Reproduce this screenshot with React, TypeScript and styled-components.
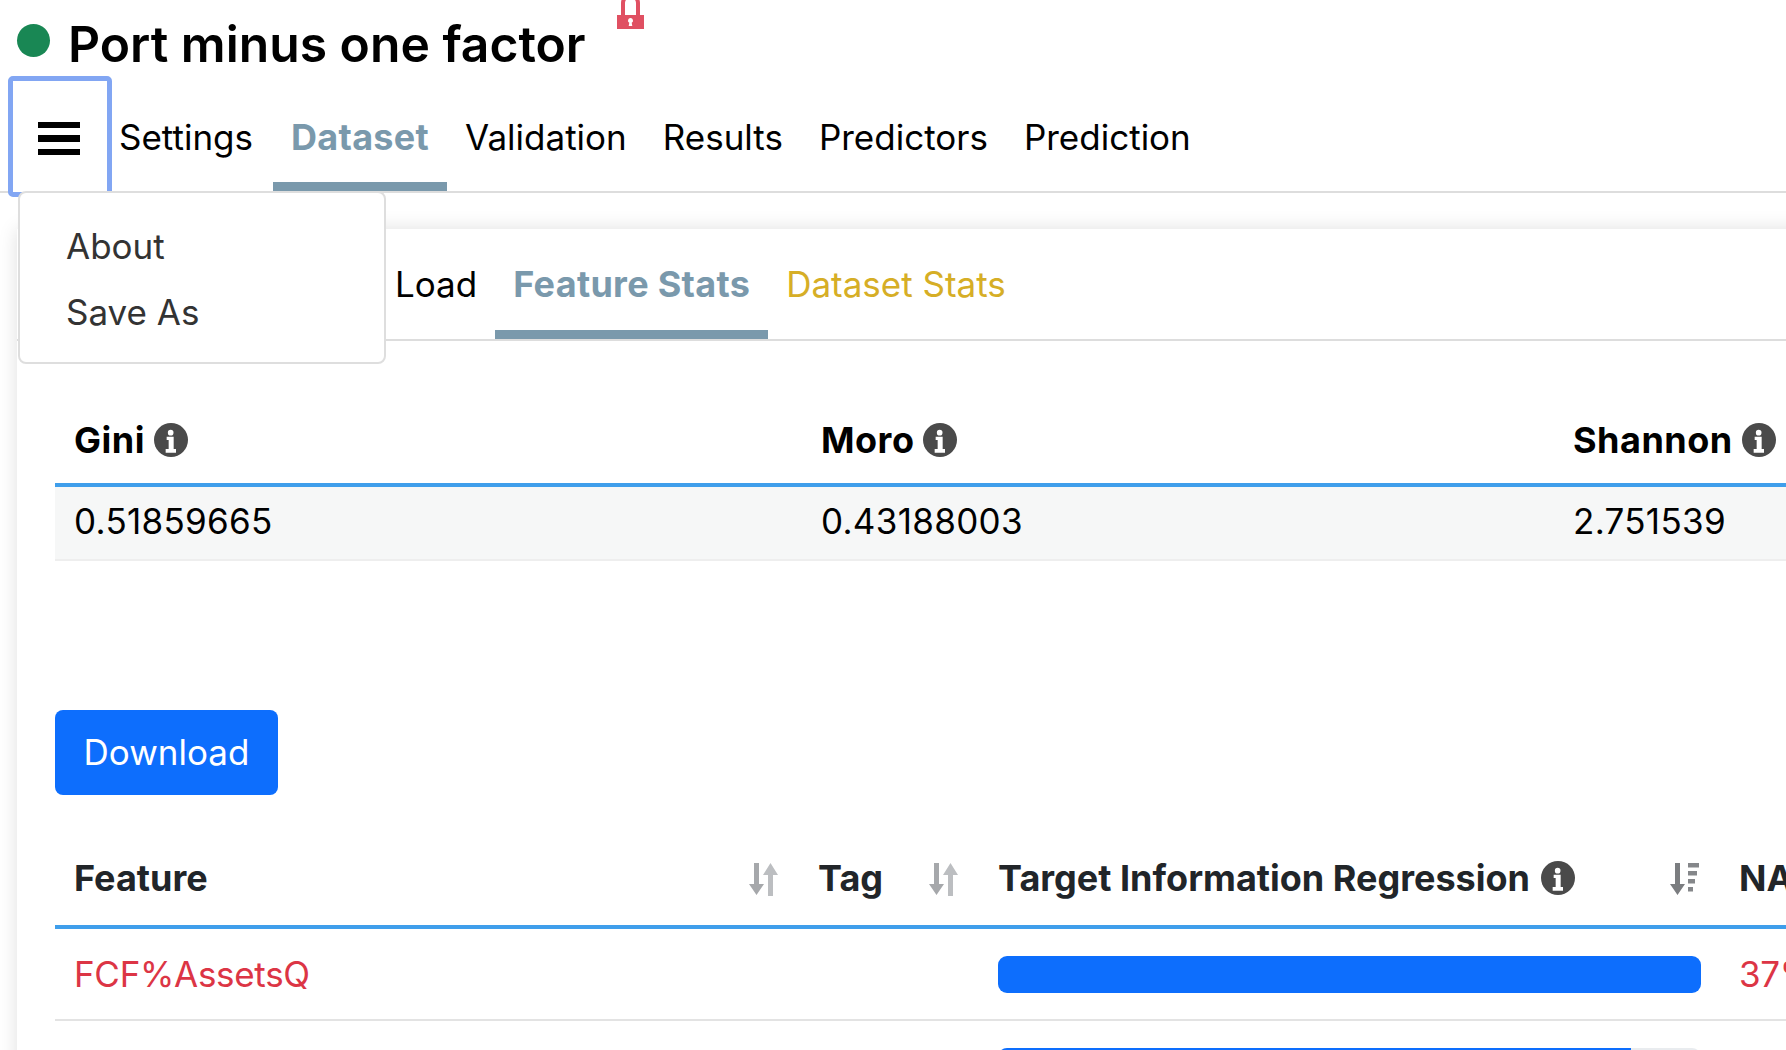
import React from 'react';
import styled, { createGlobalStyle } from 'styled-components';

const GlobalStyle = createGlobalStyle`
  html, body {
    margin: 0;
    padding: 0;
    background: #fff;
    font-family: Inter, "Liberation Sans", sans-serif;
    color: #000;
  }
  * { box-sizing: border-box; }
`;

const Page = styled.div`
  width: 1786px;
  height: 1050px;
  overflow: hidden;
  font-size: 35px;
`;

const TitleRow = styled.header`
  display: flex;
  height: 76px;
  padding-left: 17px;
  align-items: center;
`;

const StatusDot = styled.span`
  width: 33px;
  height: 33px;
  margin-top: 4px;
  border-radius: 50%;
  background: #198754;
`;

const Title = styled.h1`
  margin: 11px 0 0 18px;
  font-size: 49.8px;
  font-weight: 600;
  line-height: 60px;
`;

const LockIcon = styled.svg`
  align-self: flex-start;
  margin-left: 31px;
  width: 27px;
  height: 29px;
  color: #e05062;
`;

const NavBar = styled.nav`
  position: relative;
  display: flex;
  height: 117px;
  padding-left: 8px;
  border-bottom: 2px solid #ddd;
`;

const MenuButton = styled.button`
  flex: none;
  width: 104px;
  height: 121px;
  padding: 4px 2px 0 0;
  display: flex;
  flex-direction: column;
  align-items: center;
  justify-content: center;
  gap: 7px;
  background: #fff;
  border: 5px solid #82a6f3;
  border-radius: 5px;
  position: relative;
  z-index: 1;
`;

const MenuBar = styled.span`
  width: 42px;
  height: 6.5px;
  background: #000;
`;

const Dropdown = styled.div`
  position: absolute;
  top: 115px;
  left: 18px;
  z-index: 2;
  width: 368px;
  height: 173px;
  padding: 20px 0 0 46px;
  background: #fff;
  border: 2px solid #dedede;
  border-radius: 8px;
  color: #333;
  line-height: 66px;
`;

const Tab = styled.a<{ $active?: boolean; $warn?: boolean }>`
  flex: none;
  padding: 0 18px;
  border-bottom: 9px solid ${(p) => (p.$active ? '#7a99ac' : 'transparent')};
  color: ${(p) => (p.$active ? '#7a99ac' : p.$warn ? '#d6ae26' : '#000')};
  font-size: ${(p) => (p.$active ? 36 : 35)}px;
  font-weight: ${(p) => (p.$active ? 700 : 400)};
  letter-spacing: ${(p) => (p.$active ? 0.3 : 0)}px;
  line-height: 40px;
`;

const MainTabs = styled.div`
  display: flex;
  height: 115px;
  padding-top: 41px;

  ${Tab}:first-child {
    padding-left: 7px;
    padding-right: 20px;
  }
`;

const Panel = styled.main`
  width: 1800px;
  margin: 36px 0 0 17px;
  height: 900px;
  background: #fff;
  box-shadow: 0 0 18px rgba(0, 0, 0, 0.13);
`;

const SubTabs = styled.div`
  display: flex;
  height: 112px;
  padding: 35px 0 0 360px;
  border-bottom: 2px solid #ddd;
`;

const Section = styled.section`
  padding-left: 38px;
`;

const Table = styled.table<{ $top: number }>`
  width: 1731px;
  margin-top: ${(p) => p.$top}px;
  table-layout: fixed;
  border-collapse: collapse;
`;

const Th = styled.th<{ $width: number; $height: number }>`
  width: ${(p) => p.$width}px;
  height: ${(p) => p.$height}px;
  padding: 0 19px;
  border-bottom: 4px solid #3f9eeb;
  text-align: left;
  font-size: 36px;
  font-weight: 700;
  white-space: nowrap;
`;

const StatHead = styled.div`
  display: flex;
  align-items: center;
  letter-spacing: 0.5px;
`;

const FeatureHead = styled.div`
  display: flex;
  align-items: center;
  padding-bottom: 2px;
  color: #212529;
`;

const InfoSvg = styled.svg<{ $gap: number }>`
  flex: none;
  width: 34px;
  height: 34px;
  margin-left: ${(p) => p.$gap}px;
`;

const SortIcon = styled.svg`
  flex: none;
  margin: 4px 1px 0 auto;
  width: 30px;
  height: 33px;
`;

const StatCell = styled.td`
  height: 75px;
  padding: 0 19px 4px;
  background: #f6f7f7;
  border-bottom: 2px solid #eee;
  letter-spacing: 0.3px;
`;

const FeatureCell = styled.td<{ $red?: boolean }>`
  height: 93px;
  padding: 0 19px;
  border-bottom: 2px solid #e3e3e3;
  color: ${(p) => (p.$red ? '#dc3545' : '#000')};
  letter-spacing: -0.3px;
  white-space: nowrap;
`;

const Progress = styled.div`
  height: 37px;
  background: #e9ecef;
  border-radius: 9px;
  overflow: hidden;
`;

const ProgressFill = styled.div`
  height: 100%;
  background: #0d6efd;
`;

const DownloadButton = styled.button`
  display: block;
  width: 223px;
  height: 85px;
  margin-top: 149px;
  padding: 0 0 2px;
  border: 0;
  border-radius: 8px;
  background: #0d6efd;
  color: #fff;
  font: inherit;
`;

function InfoIcon({ gap }: { gap: number }) {
  return (
    <InfoSvg $gap={gap} viewBox="0 0 102 102">
      <circle cx="51" cy="51" r="51" fill="#4a4a4a" />
      <circle cx="50" cy="29" r="8.5" fill="#fff" />
      <path fill="#fff" d="M38 41h21v37h7v11H35V78h9V51h-6z" />
    </InfoSvg>
  );
}

function SortBoth() {
  return (
    <SortIcon viewBox="0 0 30 33">
      <path fill="#a6a8ab" d="M5 0h5v21h5L7.5 32 0 21h5z" />
      <path fill="#bcbec1" d="M19 33V12h-5L21.5 0 29 12h-5v21z" />
    </SortIcon>
  );
}

function SortDown() {
  return (
    <SortIcon viewBox="0 0 30 33">
      <path fill="#7b7d80" d="M5 0h5v21h5L7.5 32 0 21h5z" />
      <path fill="#85878a" d="M18 0h11v4.5H18zM18 8h9v4.5h-9zM18 16h7v4.5h-7zM18 24h5v4.5h-5z" />
    </SortIcon>
  );
}

const rows = [
  { feature: 'FCF%AssetsQ', pct: 100, na: '37%' },
  { feature: '', pct: 90, na: '' },
];

export default function App() {
  return (
    <Page>
      <GlobalStyle />
      <TitleRow>
        <StatusDot />
        <Title>Port minus one factor</Title>
        <LockIcon viewBox="0 0 27 29">
          <path fill="none" stroke="currentColor" strokeWidth="4" d="M6 16V3a7.5 7.5 0 0 1 15 0v13" />
          <path
            fill="currentColor"
            fillRule="evenodd"
            d="M0 15h27v14H0zM13.5 18a2.5 2.5 0 0 0-1.2 4.7l-.6 3.3h3.6l-.6-3.3a2.5 2.5 0 0 0-1.2-4.7z"
          />
        </LockIcon>
      </TitleRow>

      <NavBar>
        <MenuButton aria-label="Menu">
          <MenuBar />
          <MenuBar />
          <MenuBar />
        </MenuButton>
        <MainTabs>
          <Tab>Settings</Tab>
          <Tab $active>Dataset</Tab>
          <Tab>Validation</Tab>
          <Tab>Results</Tab>
          <Tab>Predictors</Tab>
          <Tab>Prediction</Tab>
        </MainTabs>
        <Dropdown>
          <div>About</div>
          <div>Save As</div>
        </Dropdown>
      </NavBar>

      <Panel>
        <SubTabs>
          <Tab>Load</Tab>
          <Tab $active>Feature Stats</Tab>
          <Tab $warn>Dataset Stats</Tab>
        </SubTabs>

        <Section>
          <Table $top={56}>
            <thead>
              <tr>
                <Th $width={747} $height={88}>
                  <StatHead>Gini<InfoIcon gap={9} /></StatHead>
                </Th>
                <Th $width={752} $height={88}>
                  <StatHead>Moro<InfoIcon gap={9} /></StatHead>
                </Th>
                <Th $width={232} $height={88}>
                  <StatHead>Shannon<InfoIcon gap={9} /></StatHead>
                </Th>
              </tr>
            </thead>
            <tbody>
              <tr>
                <StatCell>0.51859665</StatCell>
                <StatCell>0.43188003</StatCell>
                <StatCell>2.751539</StatCell>
              </tr>
            </tbody>
          </Table>

          <DownloadButton>Download</DownloadButton>

          <Table $top={37}>
            <thead>
              <tr>
                <Th $width={744} $height={95}>
                  <FeatureHead>Feature<SortBoth /></FeatureHead>
                </Th>
                <Th $width={180} $height={95}>
                  <FeatureHead>Tag<SortBoth /></FeatureHead>
                </Th>
                <Th $width={741} $height={95}>
                  <FeatureHead>Target Information Regression<InfoIcon gap={11} /><SortDown /></FeatureHead>
                </Th>
                <Th $width={66} $height={95}>
                  <FeatureHead>NA%</FeatureHead>
                </Th>
              </tr>
            </thead>
            <tbody>
              {rows.map((row, i) => (
                <tr key={i}>
                  <FeatureCell $red>{row.feature}</FeatureCell>
                  <FeatureCell />
                  <FeatureCell>
                    <Progress>
                      <ProgressFill style={{ width: `${row.pct}%` }} />
                    </Progress>
                  </FeatureCell>
                  <FeatureCell $red>{row.na}</FeatureCell>
                </tr>
              ))}
            </tbody>
          </Table>
        </Section>
      </Panel>
    </Page>
  );
}
